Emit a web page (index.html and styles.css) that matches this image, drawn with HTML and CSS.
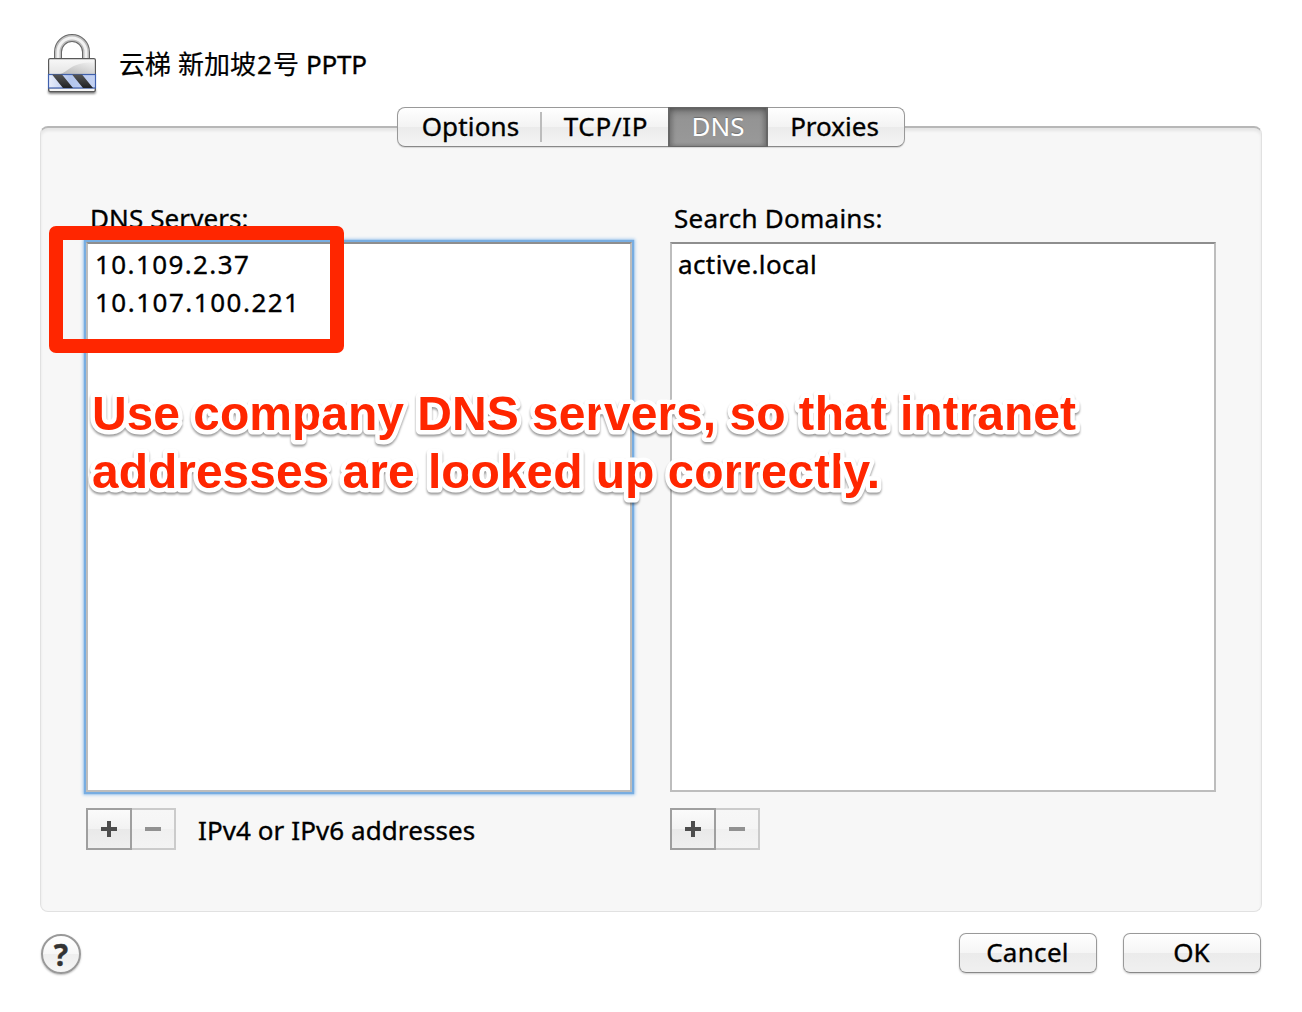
FILE: index.html
```html
<!DOCTYPE html>
<html lang="en">
<head>
<meta charset="utf-8">
<title>Network – DNS</title>
<link rel="stylesheet" href="styles.css">
</head>
<body>
<main class="sheet">
  <header class="title">
    <svg class="lock" width="56" height="68" viewBox="0 0 56 68">
      <defs>
        <linearGradient id="body" x1="0" x2="0" y1="0" y2="1"><stop offset="0" stop-color="#f8f8f8"/><stop offset="1" stop-color="#d0d0d0"/></linearGradient>
        <linearGradient id="shine" x1="0" x2="1" y1="1" y2="0"><stop offset="0" stop-color="#b5b5b5"/><stop offset="1" stop-color="#f1f1f1"/></linearGradient>
        <linearGradient id="blue" x1="0" x2="1" y1="0" y2="0"><stop offset="0" stop-color="#e9eefb"/><stop offset=".45" stop-color="#b3c5ec"/><stop offset="1" stop-color="#c4d2f2"/></linearGradient>
        <linearGradient id="bar" x1="0" x2="0" y1="0" y2="1"><stop offset="0" stop-color="#555"/><stop offset="1" stop-color="#202225"/></linearGradient>
        <filter id="soft" x="-20%" y="-200%" width="140%" height="500%"><feGaussianBlur stdDeviation="1.3"/></filter>
      </defs>
      <rect x="4" y="59" width="48" height="5" rx="2" fill="#000" opacity=".45" filter="url(#soft)"/>
      <path d="M14 32V22a14 14 0 0 1 28 0v10" fill="none" stroke="#686868" stroke-width="8"/>
      <path d="M14 32V22a14 14 0 0 1 28 0v10" fill="none" stroke="#bdbdbd" stroke-width="6"/>
      <path d="M14 32V22a14 14 0 0 1 28 0v10" fill="none" stroke="#f2f2f2" stroke-width="3"/>
      <rect x="4.600" y="28.600" width="46.800" height="33" rx="1.500" fill="url(#body)" stroke="#595959" stroke-width="1.200"/>
      <path d="M16 44c5-1 9-6 15-8.500S42 32.500 50 32.500V44z" fill="url(#shine)"/>
      <rect x="4.500" y="44.500" width="47" height="13.500" fill="url(#blue)" stroke="#3f60ad" stroke-width="1.200"/>
      <path d="M8 44.500h10L29 58H19zM28 44.500h10L49 58H39z" fill="url(#bar)"/>
      <path d="M6 60h44" stroke="#f5f5f5" stroke-width="2"/>
    </svg>
    <h1 class="name"><span class="han">云梯</span><span class="han place">新加坡</span><span class="two">2</span><span class="han">号</span><span class="pptp">PPTP</span></h1>
  </header>

  <nav class="tabs">
    <span class="tab t-options"><span class="w-options">Options</span></span>
    <span class="tab t-tcp"><span class="w-tcp">TCP/IP</span></span>
    <span class="tab t-dns active"><span>DNS</span></span>
    <span class="tab t-prox"><span>Proxies</span></span>
  </nav>

  <section class="panel">
    <div class="column">
      <h2 class="label"><span class="w-servers">DNS Servers:</span></h2>
      <ul class="list focused">
        <li><span class="w-ip1">10.109.2.37</span></li>
        <li><span class="w-ip2">10.107.100.221</span></li>
      </ul>
      <div class="controls">
        <span class="step"><svg width="16" height="16"><path d="M0 8h16M8 0v16" stroke="#4d4d4d" stroke-width="4"/></svg></span>
        <span class="step disabled"><svg width="16" height="16"><path d="M0 8h16" stroke="#919191" stroke-width="4"/></svg></span>
        <span class="hint">IPv4 or IPv6 addresses</span>
      </div>
    </div>
    <div class="column">
      <h2 class="label"><span class="w-search">Search Domains:</span></h2>
      <ul class="list domains">
        <li><span class="w-local">active.local</span></li>
      </ul>
      <div class="controls">
        <span class="step"><svg width="16" height="16"><path d="M0 8h16M8 0v16" stroke="#4d4d4d" stroke-width="4"/></svg></span>
        <span class="step disabled"><svg width="16" height="16"><path d="M0 8h16" stroke="#919191" stroke-width="4"/></svg></span>
      </div>
    </div>
  </section>

  <footer class="footer">
    <span class="help">?</span>
    <span class="button"><span class="w-cancel">Cancel</span></span>
    <span class="button"><span>OK</span></span>
  </footer>

  <div class="highlight"></div>
  <svg class="note" width="1040" height="150" viewBox="0 0 1040 150">
    <text x="12" y="60" textLength="984">Use company DNS servers, so that intranet</text>
    <text x="12" y="118" textLength="788">addresses are looked up correctly.</text>
  </svg>
</main>
</body>
</html>
```
FILE: styles.css
```css
* { box-sizing: border-box; }
body {
  margin: 0;
  background: #fff;
  color: #000;
  font: 26px/38px "Noto Sans", "Noto Sans CJK SC", sans-serif;
  -webkit-text-stroke: .35px currentColor;
}
h1, h2, ul { margin: 0; padding: 0; font: inherit; list-style: none; }
span { white-space: nowrap; }

.sheet {
  position: relative;
  width: 1302px;
  height: 1012px;
  padding: 30px 40px 0;
  overflow: hidden;
}
.title { display: flex; height: 77px; padding-left: 4px; }
.lock { flex: none; }
.name { display: flex; align-items: baseline; padding: 14px 0 0 19px; }
.han { font-family: "Noto Sans CJK SC", sans-serif; font-size: 26px; line-height: 38px; -webkit-text-stroke: .2px currentColor; }
.place { margin-left: 7px; }
.two { padding: 0 1px; }
.pptp { margin-left: 7px; letter-spacing: -.2px; }

.tabs {
  position: relative;
  z-index: 1;
  display: flex;
  width: 508px;
  height: 40px;
  margin: 0 auto 1px;
  border: 1.5px solid #999;
  border-bottom-color: #888;
  border-radius: 8px;
  background: linear-gradient(#fff, #f3f3f3 50%, #ebebeb 51%, #f4f4f4);
  box-shadow: 0 1px 1px #0002;
}
.tab { display: flex; justify-content: center; align-items: center; position: relative; height: 36px; }
.t-options { width: 144px; padding-left: 1px; }
.t-options::after { content: ""; position: absolute; right: 0; top: 4px; width: 2px; height: 30px; background: #bcbcbc; }
.t-tcp { width: 126px; padding-left: 2px; }
.t-dns { width: 100px; }
.t-prox { width: 135px; padding-right: 2px; }
.w-options { letter-spacing: .15px; }
.w-tcp { letter-spacing: .7px; }
.w-servers { letter-spacing: .1px; }
.w-search { letter-spacing: .25px; }
.w-ip1 { letter-spacing: 1.400px; }
.w-ip2 { letter-spacing: 1.500px; }
.w-local { letter-spacing: .4px; }
.w-cancel { letter-spacing: .3px; }
.active {
  height: 40px;
  margin-top: -1px;
  padding-bottom: 2px;
  color: #fff;
  -webkit-text-stroke: 0;
  background: linear-gradient(#858585, #949494 30%, #999);
  border: solid #666;
  border-width: 1px 2px;
  box-shadow: inset 0 3px 5px #0003, inset 3px 0 4px #0002, inset -3px 0 4px #0002;
  text-shadow: 0 -1px 1px #0004;
}

.panel {
  display: flex;
  gap: 38px;
  height: 786px;
  margin-top: -22px;
  padding: 71px 0 0 45px;
  background: #f7f7f7;
  border: 1.5px solid #e1e1e1;
  border-top: 2px solid #b7b7b7;
  border-radius: 8px;
  box-shadow: inset 0 3px 3px #00000012;
}
.column { width: 546px; }
.label { height: 43px; padding-left: 4px; }
.list {
  height: 550px;
  padding: 1px 7px;
  background: #fff;
  border: 2px solid #bdbdbd;
  border-top-color: #8e8e8e;
}
.domains { padding-left: 6px; }
.focused { box-shadow: 0 0 1px 2px #78ade1, 0 0 3px 3px #a2c9ee; }
.controls { display: flex; padding-top: 16px; }
.step {
  display: flex;
  justify-content: center;
  align-items: center;
  width: 46px;
  height: 42px;
  border: 2px solid #9f9f9f;
  background: linear-gradient(#fbfbfb, #f2f2f2 50%, #e9e9e9 51%, #efefef);
}
.disabled { width: 44px; border-color: #cbcbcb; border-left: 0; background: linear-gradient(#f7f7f7, #f5f5f5 50%, #f0f0f0 51%, #f3f3f3); }
.hint { padding: 3px 0 0 22px; letter-spacing: .08px; }

.footer { display: flex; gap: 26px; margin-top: 21px; padding: 0 1px; }
.help {
  width: 40px;
  height: 40px;
  margin: 1px auto 0 0;
  border: 2px solid #999;
  border-radius: 50%;
  background: linear-gradient(#fff, #f7f7f7 50%, #eee 51%, #f6f6f6);
  box-shadow: 0 1px 2px #0004;
  color: #333;
  font: bold 30px/37px "Noto Sans", sans-serif;
  text-align: center;
}
.button {
  display: flex;
  justify-content: center;
  width: 138px;
  height: 40px;
  padding-right: 1px;
  border: 1.5px solid #999;
  border-bottom-color: #888;
  border-radius: 7px;
  background: linear-gradient(#fff, #f5f5f5 50%, #ebebeb 51%, #f0f0f0);
  box-shadow: 0 1px 2px #0003;
  line-height: 36px;
}

.highlight {
  position: absolute;
  left: 49px;
  top: 226px;
  width: 295px;
  height: 127px;
  border: 14px solid #ff2600;
  border-radius: 7px;
}
.note {
  position: absolute;
  left: 80px;
  top: 370px;
  fill: #ff2600;
  stroke: #fff;
  stroke-width: 9px;
  stroke-linejoin: round;
  paint-order: stroke fill;
  font: bold 48px "Liberation Sans", Arial, sans-serif;
  filter: drop-shadow(0 2px 1.200px #0006);
}
```
